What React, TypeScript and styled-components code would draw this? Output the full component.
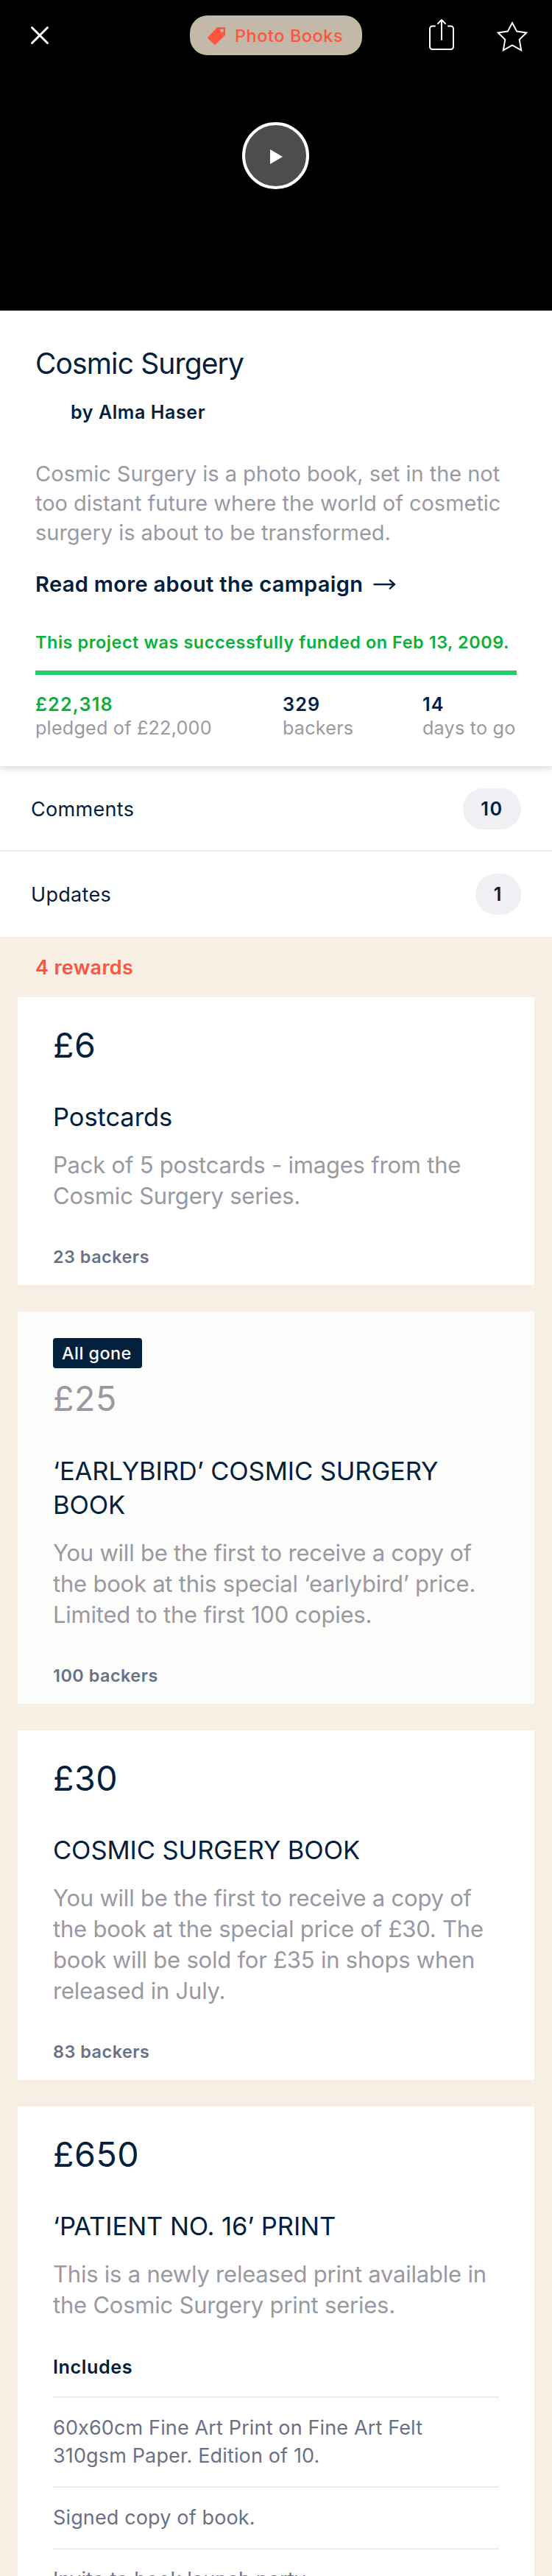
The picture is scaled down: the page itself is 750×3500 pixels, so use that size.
import React from "react";
import styled, { createGlobalStyle } from "styled-components";

const ink = "#03203c";
const grey = "#9a99a2";
const slate = "#6a7186";
const coral = "#ff5440";
const green = "#0bb03b";

const GlobalStyle = createGlobalStyle`
  * { box-sizing: border-box; }
  html, body { margin: 0; padding: 0; }
  body {
    background: #f7efe3;
    font-family: Inter, "Liberation Sans", sans-serif;
    font-feature-settings: "calt" 0;
    color: ${ink};
  }
  h1, h2, h3, p, ul { margin: 0; padding: 0; font-weight: 400; }
`;

const Page = styled.main`
  width: 750px;
  height: 3500px;
  overflow: hidden;
  background: #f7efe3;
`;

const Hero = styled.header`
  position: relative;
  height: 422px;
  background: #000;
  display: flex;
  align-items: center;
  justify-content: center;
`;

const TopBar = styled.nav`
  position: absolute;
  inset: 0 0 auto 0;
  height: 96px;
  padding: 0 32px 0 40px;
  display: grid;
  grid-template-columns: 218px 234px 1fr;
  align-items: center;
  svg { display: block; }
`;

const BarCell = styled.div`
  display: flex;
  align-items: center;
`;

const BarActions = styled(BarCell)`
  justify-content: flex-end;
  gap: 56px;
`;

const CategoryPill = styled.div`
  width: 234px;
  height: 54px;
  border-radius: 24px;
  background: #c2b9a9;
  color: ${coral};
  display: flex;
  align-items: center;
  padding: 1px 0 0 24px;
  gap: 13px;
  font-size: 23.5px;
  font-weight: 550;
  letter-spacing: 0.54px;
  line-height: 30px;
  white-space: nowrap;
`;

const PlayButton = styled.button`
  width: 91px;
  height: 91px;
  margin: 1px 1px 0 0;
  padding: 3px 0 0 2px;
  border: 4px solid #fff;
  border-radius: 50%;
  background: #4d4d4d;
  display: flex;
  align-items: center;
  justify-content: center;
`;

const Summary = styled.section`
  position: relative;
  z-index: 1;
  height: 619px;
  padding: 47px 48px 0;
  background: #fff;
  box-shadow: 0 3px 9px rgba(0, 0, 0, 0.16);
`;

const Title = styled.h1`
  font-size: 39px;
  line-height: 50px;
  letter-spacing: -0.88px;
`;

const Creator = styled.p`
  margin: 25px 0 0 48px;
  font-size: 25px;
  line-height: 32px;
  font-weight: 600;
  letter-spacing: 0.59px;
`;

const Blurb = styled.p`
  margin-top: 48px;
  font-size: 29px;
  line-height: 40px;
  letter-spacing: -0.03px;
  color: ${grey};
  white-space: nowrap;
`;

const ReadMore = styled.a`
  margin-top: 30px;
  display: flex;
  align-items: center;
  gap: 14px;
  font-size: 29px;
  line-height: 40px;
  font-weight: 600;
  letter-spacing: 0.34px;
  white-space: nowrap;
`;

const FundedNote = styled.p`
  margin-top: 44px;
  font-size: 23.4px;
  line-height: 30px;
  font-weight: 600;
  letter-spacing: 0.57px;
  color: ${green};
  white-space: nowrap;
`;

const Progress = styled.div`
  margin-top: 23px;
  height: 6px;
  background: #25cb68;
`;

const Stats = styled.div`
  margin-top: 24px;
  display: grid;
  grid-template-columns: 336px 190px auto;
  font-size: 25.2px;
  line-height: 32px;
  letter-spacing: 0.2px;
  color: ${grey};
  white-space: nowrap;
`;

const StatValue = styled.div<{ $accent?: boolean }>`
  font-weight: 600;
  letter-spacing: 1.2px;
  color: ${(p) => (p.$accent ? green : ink)};
`;

const NavRow = styled.a<{ $divided?: boolean }>`
  height: 116px;
  padding: 0 42px;
  background: #fff;
  box-shadow: ${(p) => (p.$divided ? "inset 0 -2px 0 #ececee" : "none")};
  display: flex;
  align-items: center;
  justify-content: space-between;
`;

const NavLabel = styled.span`
  padding-top: 1px;
  font-size: 27px;
  line-height: 34px;
  letter-spacing: 0.32px;
`;

const CountBadge = styled.span<{ $wide?: boolean }>`
  width: ${(p) => (p.$wide ? 79 : 62)}px;
  height: 56px;
  border-radius: 28px;
  background: #efeff4;
  font-size: 25.2px;
  font-weight: 600;
  letter-spacing: 1.6px;
  line-height: 56px;
  text-align: center;
`;

const RewardsHeading = styled.h2`
  height: 82px;
  padding: 25px 48px 0;
  font-size: 27px;
  line-height: 34px;
  font-weight: 600;
  letter-spacing: 0.3px;
  color: ${coral};
`;

const RewardList = styled.div`
  display: flex;
  flex-direction: column;
  gap: 36px;
  padding: 0 24px;
`;

const Card = styled.article<{ $soldOut?: boolean }>`
  padding: 36px 48px 23px;
  background: ${(p) => (p.$soldOut ? "#fcfcfa" : "#fff")};
`;

const SoldOutTag = styled.div`
  width: 121px;
  height: 41px;
  padding-left: 12px;
  border-radius: 4px;
  background: ${ink};
  color: #fff;
  font-size: 23.4px;
  line-height: 41px;
  font-weight: 550;
  letter-spacing: 0.46px;
`;

const Price = styled.div<{ $muted?: boolean }>`
  font-size: 46.5px;
  line-height: 58px;
  letter-spacing: 0.6px;
  margin-top: ${(p) => (p.$muted ? "12px" : "0")};
  padding-bottom: ${(p) => (p.$muted ? "1px" : "0")};
  color: ${(p) => (p.$muted ? grey : ink)};
`;

const RewardTitle = styled.h3`
  margin-top: 46px;
  font-size: 34.5px;
  line-height: 46px;
  letter-spacing: -0.08px;
  white-space: nowrap;
`;

const RewardText = styled.p`
  margin-top: 21px;
  font-size: 31px;
  line-height: 42px;
  letter-spacing: -0.22px;
  color: ${grey};
  white-space: nowrap;
`;

const Backers = styled.p`
  margin-top: 47px;
  font-size: 23.4px;
  line-height: 30px;
  font-weight: 600;
  letter-spacing: 0.5px;
  color: ${slate};
`;

const IncludesHeading = styled.h3`
  margin-top: 46px;
  padding-bottom: 23px;
  font-size: 25.2px;
  line-height: 34px;
  font-weight: 600;
  letter-spacing: 0.57px;
`;

const IncludedItem = styled.li`
  list-style: none;
  padding: 22px 0;
  border-top: 2px solid #ececee;
  font-size: 27px;
  line-height: 38px;
  letter-spacing: 0.14px;
  color: ${slate};
  white-space: nowrap;
`;

type Reward = {
  price: string;
  title: string[];
  text: string[];
  backers?: string;
  soldOut?: boolean;
  includes?: string[][];
};

const rewards: Reward[] = [
  {
    price: "£6",
    title: ["Postcards"],
    text: ["Pack of 5 postcards - images from the", "Cosmic Surgery series."],
    backers: "23 backers",
  },
  {
    price: "£25",
    title: ["‘EARLYBIRD’ COSMIC SURGERY", "BOOK"],
    text: [
      "You will be the first to receive a copy of",
      "the book at this special ‘earlybird’ price.",
      "Limited to the first 100 copies.",
    ],
    backers: "100 backers",
    soldOut: true,
  },
  {
    price: "£30",
    title: ["COSMIC SURGERY BOOK"],
    text: [
      "You will be the first to receive a copy of",
      "the book at the special price of £30. The",
      "book will be sold for £35 in shops when",
      "released in July.",
    ],
    backers: "83 backers",
  },
  {
    price: "£650",
    title: ["‘PATIENT NO. 16’ PRINT"],
    text: ["This is a newly released print available in", "the Cosmic Surgery print series."],
    includes: [
      ["60x60cm Fine Art Print on Fine Art Felt", "310gsm Paper. Edition of 10."],
      ["Signed copy of book."],
      ["Invite to book launch party."],
    ],
  },
];

const Lines = ({ of }: { of: string[] }) => (
  <>
    {of.map((line, i) => (
      <React.Fragment key={line}>
        {i > 0 && <br />}
        {line}
      </React.Fragment>
    ))}
  </>
);

const CloseIcon = () => (
  <svg width="28" height="28" viewBox="0 0 28 28" fill="none" stroke="#fff" strokeWidth="3" strokeLinecap="round">
    <path d="M3.5 3.5 24.5 24.5M24.5 3.5 3.5 24.5" />
  </svg>
);

const TagIcon = () => (
  <svg width="24" height="24" viewBox="0 0 24 24" fill={coral}>
    <path
      fillRule="evenodd"
      d="M13.2 0H23.2a.8.8 0 0 1 .8.8V10.4L10.6 23.8a.8.8 0 0 1-1.2 0L.2 14.9a.8.8 0 0 1 0-1.2ZM19.5 2.2a2.3 2.3 0 1 0 0 4.6 2.3 2.3 0 0 0 0-4.6Z"
    />
  </svg>
);

const ShareGlyph = styled.svg`
  margin-bottom: 2px;
`;

const ShareIcon = () => (
  <ShareGlyph width="36" height="44" viewBox="0 0 36 44" fill="none" stroke="#fff" strokeWidth="2" strokeLinecap="round" strokeLinejoin="round">
    <path d="M9 10.5H5.5a3.5 3.5 0 0 0-3.5 3.5V38.5a3.5 3.5 0 0 0 3.5 3.5H30.5a3.5 3.5 0 0 0 3.5-3.5V14a3.5 3.5 0 0 0-3.5-3.5H27M18 29V2M13 7l5-5 5 5" />
  </ShareGlyph>
);

const StarIcon = () => (
  <svg width="44" height="44" viewBox="0 0 44 44" fill="none" stroke="#fff" strokeWidth="2">
    <path d="M22 5 28.2 16.6 41.2 18.4 31.7 27.8 34.2 42.3 22 35.4 9.8 42.3 12.3 27.8 2.8 18.4 15.8 16.6Z" />
  </svg>
);

const ArrowIcon = () => (
  <svg width="31" height="16" viewBox="0 0 31 16" fill="none" stroke={ink} strokeWidth="2.4" strokeLinecap="round">
    <path d="M1.5 8H29M22.8 2.4 29 8l-6.2 5.600" />
  </svg>
);

const RewardCard = ({ reward }: { reward: Reward }) => (
  <Card $soldOut={reward.soldOut}>
    {reward.soldOut && <SoldOutTag>All gone</SoldOutTag>}
    <Price $muted={reward.soldOut}>{reward.price}</Price>
    <RewardTitle><Lines of={reward.title} /></RewardTitle>
    <RewardText><Lines of={reward.text} /></RewardText>
    {reward.backers && <Backers>{reward.backers}</Backers>}
    {reward.includes && (
      <>
        <IncludesHeading>Includes</IncludesHeading>
        <ul>
          {reward.includes.map((item) => (
            <IncludedItem key={item[0]}><Lines of={item} /></IncludedItem>
          ))}
        </ul>
      </>
    )}
  </Card>
);

export default function App() {
  return (
    <Page>
      <GlobalStyle />
      <Hero>
        <TopBar>
          <BarCell><CloseIcon /></BarCell>
          <CategoryPill><TagIcon />Photo Books</CategoryPill>
          <BarActions><ShareIcon /><StarIcon /></BarActions>
        </TopBar>
        <PlayButton aria-label="Play">
          <svg width="17" height="20" viewBox="0 0 17 20"><path d="M0 0 17 10 0 20Z" fill="#fff" /></svg>
        </PlayButton>
      </Hero>
      <Summary>
        <Title>Cosmic Surgery</Title>
        <Creator>by Alma Haser</Creator>
        <Blurb>
          <Lines of={["Cosmic Surgery is a photo book, set in the not", "too distant future where the world of cosmetic", "surgery is about to be transformed."]} />
        </Blurb>
        <ReadMore>Read more about the campaign<ArrowIcon /></ReadMore>
        <FundedNote>This project was successfully funded on Feb 13, 2009.</FundedNote>
        <Progress />
        <Stats>
          <div><StatValue $accent>£22,318</StatValue>pledged of £22,000</div>
          <div><StatValue>329</StatValue>backers</div>
          <div><StatValue>14</StatValue>days to go</div>
        </Stats>
      </Summary>
      <NavRow $divided><NavLabel>Comments</NavLabel><CountBadge $wide>10</CountBadge></NavRow>
      <NavRow><NavLabel>Updates</NavLabel><CountBadge>1</CountBadge></NavRow>
      <RewardsHeading>4 rewards</RewardsHeading>
      <RewardList>
        {rewards.map((r) => <RewardCard key={r.price} reward={r} />)}
      </RewardList>
    </Page>
  );
}
